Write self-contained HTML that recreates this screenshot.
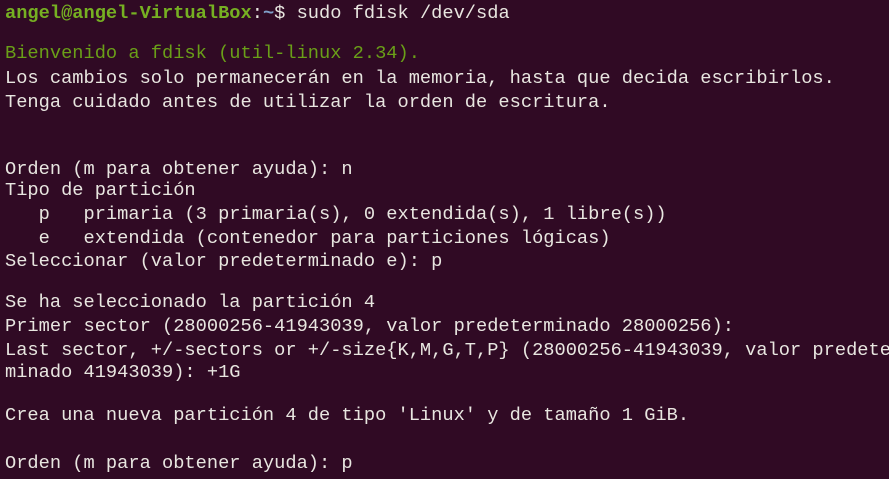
<!DOCTYPE html>
<html><head><meta charset="utf-8"><style>
html,body{margin:0;padding:0;}
body{width:889px;height:479px;background:#300a24;overflow:hidden;position:relative;font-family:"Liberation Mono","DejaVu Sans Mono",monospace;font-size:18.7px;color:#e8e6e0;}
.l{position:absolute;left:5px;white-space:pre;line-height:22px;}
.g{color:#6a9f18;}
.p{color:#76b022;font-weight:bold;}
.b{color:#7f9fc8;font-weight:bold;}
</style></head><body>
<div class="l" style="top:2px"><span class="p">angel@angel-VirtualBox</span>:<span class="b">~</span>$ sudo fdisk /dev/sda</div>
<div class="l g" style="top:42px">Bienvenido a fdisk (util-linux 2.34).</div>
<div class="l" style="top:67px">Los cambios solo permanecerán en la memoria, hasta que decida escribirlos.</div>
<div class="l" style="top:91px">Tenga cuidado antes de utilizar la orden de escritura.</div>
<div class="l" style="top:158px">Orden (m para obtener ayuda): n</div>
<div class="l" style="top:179px">Tipo de partición</div>
<div class="l" style="top:203px">   p   primaria (3 primaria(s), 0 extendida(s), 1 libre(s))</div>
<div class="l" style="top:227px">   e   extendida (contenedor para particiones lógicas)</div>
<div class="l" style="top:250px">Seleccionar (valor predeterminado e): p</div>
<div class="l" style="top:291px">Se ha seleccionado la partición 4</div>
<div class="l" style="top:315px">Primer sector (28000256-41943039, valor predeterminado 28000256):</div>
<div class="l" style="top:339px">Last sector, +/-sectors or +/-size{K,M,G,T,P} (28000256-41943039, valor predeter</div>
<div class="l" style="top:361px">minado 41943039): +1G</div>
<div class="l" style="top:404px">Crea una nueva partición 4 de tipo 'Linux' y de tamaño 1 GiB.</div>
<div class="l" style="top:452px">Orden (m para obtener ayuda): p</div>
</body></html>
